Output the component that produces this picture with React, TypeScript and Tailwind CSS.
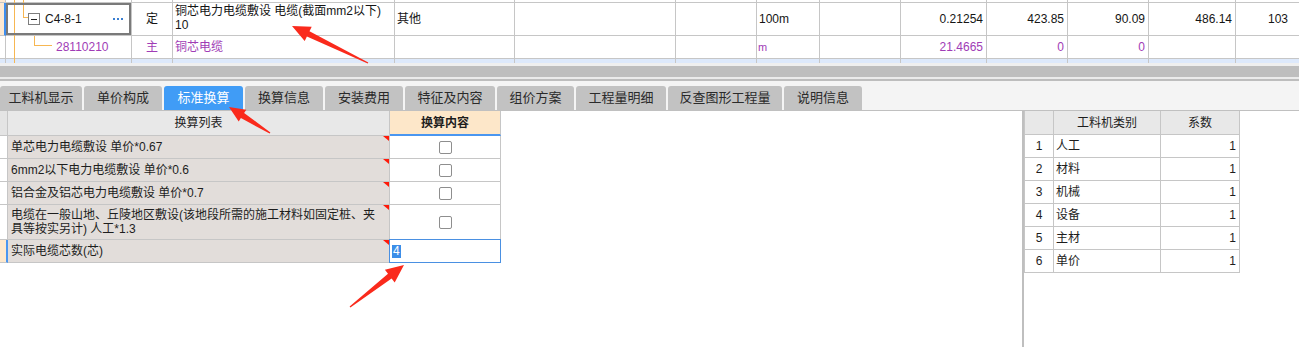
import React from "react";

const topW = [
  "w-[6px]",
  "w-[126px]",
  "w-[41px]",
  "w-[222px]",
  "w-[120px]",
  "w-[161px]",
  "w-[81px]",
  "w-[63px]",
  "w-[81px]",
  "w-[86px]",
  "w-[81px]",
  "w-[81px]",
  "w-[87px]",
  "w-[120px]",
];

type CellDef = { c?: React.ReactNode; cls?: string };

function TopRow({ h, bg = "", cells }: { h: string; bg?: string; cells: Record<number, CellDef> }) {
  return (
    <div className={`flex ${h} ${bg}`}>
      {topW.map((w, i) => {
        const d = cells[i] || {};
        return (
          <div key={i} className={`${w} shrink-0 relative border-r border-b border-[#c6c6c6] ${d.cls ?? ""}`}>
            {d.c}
          </div>
        );
      })}
    </div>
  );
}

const TreeMain = () => <div className="absolute left-[8px] top-0 -bottom-px w-px bg-[#f7b752]" />;

function TopGrid() {
  const purple = "text-[#a03cb6]";
  return (
    <div className="h-[63px] overflow-hidden text-[12px] text-[#151515]">
      <TopRow
        h="h-[3px]"
        cells={{
          0: { cls: "bg-[#fde9d2]" },
          1: {
            c: (
              <>
                <TreeMain />
                <div className="absolute left-[17px] top-0 -bottom-px w-px bg-[#f7b752]" />
              </>
            ),
          },
        }}
      />
      <TopRow
        h="h-[33px]"
        cells={{
          0: { cls: "bg-[#fde9d2] border-r-2 border-r-[#3d8ef0]" },
          1: {
            cls: "flex items-center",
            c: (
              <>
                <TreeMain />
                <div className="absolute left-[17px] top-0 h-[14px] w-px bg-[#f7b752]" />
                <div className="absolute left-[17px] top-[14px] h-px w-[5px] bg-[#f7b752]" />
                <div className="ml-[22px] w-[12px] h-[12px] border border-[#7d7d7d] bg-white flex items-center justify-center shrink-0">
                  <div className="w-[6px] h-px bg-[#222]" />
                </div>
                <span className="ml-[5px] leading-[14px]">C4-8-1</span>
                <div className="ml-auto mr-[8px] flex gap-[2px]">
                  <div className="w-[2px] h-[2px] bg-[#3a7fd2]" />
                  <div className="w-[2px] h-[2px] bg-[#3a7fd2]" />
                  <div className="w-[2px] h-[2px] bg-[#3a7fd2]" />
                </div>
                <div className="absolute inset-0 border-2 border-[#7a7a7a] pointer-events-none" />
              </>
            ),
          },
          2: { cls: "flex items-center justify-center", c: <span>定</span> },
          3: {
            cls: "pl-[2px] pt-[1px] leading-[14px] whitespace-nowrap",
            c: (
              <>
                <div>铜芯电力电缆敷设 电缆(截面mm2以下)</div>
                <div>10</div>
              </>
            ),
          },
          4: { cls: "flex items-center pl-[2px]", c: <span>其他</span> },
          7: { cls: "flex items-center pl-[2px]", c: <span>100m</span> },
          9: { cls: "flex items-center justify-end pr-[3px]", c: <span>0.21254</span> },
          10: { cls: "flex items-center justify-end pr-[3px]", c: <span>423.85</span> },
          11: { cls: "flex items-center justify-end pr-[3px]", c: <span>90.09</span> },
          12: { cls: "flex items-center justify-end pr-[3px]", c: <span>486.14</span> },
          13: { cls: "flex items-center pl-[32px]", c: <span>103</span> },
        }}
      />
      <TopRow
        h="h-[23px]"
        cells={{
          1: {
            cls: `flex items-center ${purple}`,
            c: (
              <>
                <TreeMain />
                <div className="absolute left-[28px] top-0 h-[9px] w-px bg-[#f7b752]" />
                <div className="absolute left-[28px] top-[9px] h-px w-[18px] bg-[#f7b752]" />
                <span className="ml-[50px]">28110210</span>
              </>
            ),
          },
          2: { cls: `flex items-center justify-center ${purple}`, c: <span>主</span> },
          3: { cls: `flex items-center pl-[2px] ${purple}`, c: <span>铜芯电缆</span> },
          7: { cls: `flex items-center pl-[1px] text-[11px] ${purple}`, c: <span>m</span> },
          9: { cls: `flex items-center justify-end pr-[3px] ${purple}`, c: <span>21.4665</span> },
          10: { cls: `flex items-center justify-end pr-[3px] ${purple}`, c: <span>0</span> },
          11: { cls: `flex items-center justify-end pr-[3px] ${purple}`, c: <span>0</span> },
        }}
      />
      <TopRow h="h-[6px]" bg="bg-[#dde9fb]" cells={{ 1: { c: <TreeMain /> } }} />
    </div>
  );
}

const tabs: { label: string; w: string; active?: boolean }[] = [
  { label: "工料机显示", w: "w-[82px]" },
  { label: "单价构成", w: "w-[78px]" },
  { label: "标准换算", w: "w-[79px]", active: true },
  { label: "换算信息", w: "w-[78px]" },
  { label: "安装费用", w: "w-[78px]" },
  { label: "特征及内容", w: "w-[90px]" },
  { label: "组价方案", w: "w-[77px]" },
  { label: "工程量明细", w: "w-[90px]" },
  { label: "反查图形工程量", w: "w-[114px]" },
  { label: "说明信息", w: "w-[78px]" },
];

function TabBar() {
  return (
    <div className="h-[30px] bg-[#f4f4f4] border-b border-[#c0c0c0] flex items-end gap-[2px]">
      {tabs.map((t) => (
        <div
          key={t.label}
          className={`${t.w} h-[24px] shrink-0 rounded-t-[3px] flex items-center justify-center text-[13px] ${
            t.active ? "bg-[#409cf6] text-white" : "bg-[#c2c2c2] text-[#2a2a2a]"
          }`}
        >
          {t.label}
        </div>
      ))}
    </div>
  );
}

const RedCorner = () => (
  <svg className="absolute top-0 right-0" width="6" height="5" viewBox="0 0 6 5">
    <polygon points="0,0 6,0 6,5" fill="#ff1a0a" />
  </svg>
);

const Checkbox = () => <div className="w-[13px] h-[13px] border border-[#8e8e8e] rounded-[2px] bg-white" />;

const leftRows: { h: string; text: React.ReactNode; kind: "cb" | "input" }[] = [
  { h: "h-[23px]", text: "单芯电力电缆敷设 单价*0.67", kind: "cb" },
  { h: "h-[23px]", text: "6mm2以下电力电缆敷设 单价*0.6", kind: "cb" },
  { h: "h-[23px]", text: "铝合金及铝芯电力电缆敷设 单价*0.7", kind: "cb" },
  {
    h: "h-[35px]",
    text: (
      <div className="leading-[14px]">
        <div>电缆在一般山地、丘陵地区敷设(该地段所需的施工材料如固定桩、夹</div>
        <div>具等按实另计) 人工*1.3</div>
      </div>
    ),
    kind: "cb",
  },
  { h: "h-[23px]", text: "实际电缆芯数(芯)", kind: "input" },
];

function LeftTable() {
  const b = "border-r border-b border-[#c6c6c6]";
  return (
    <div className="w-[501px] text-[12px] text-[#1d1d1d]">
      <div className="flex h-[25px]">
        <div className={`w-[8px] shrink-0 bg-[#e4e4e4] ${b}`} />
        <div className={`w-[382px] shrink-0 bg-[#e8e8e8] flex items-center justify-center ${b}`}>换算列表</div>
        <div className="w-[111px] shrink-0 bg-[#fde7c9] border-r border-[#c6c6c6] border-b-2 border-b-[#4a96f0] flex items-center justify-center font-bold">
          换算内容
        </div>
      </div>
      {leftRows.map((r, i) => (
        <div key={i} className={`flex ${r.h}`}>
          <div
            className={`w-[8px] shrink-0 ${b} ${
              r.kind === "input" ? "bg-[#fde8cd] border-r-2 border-r-[#4a96f0]" : "bg-white"
            }`}
          />
          <div className={`w-[382px] shrink-0 bg-[#e2ddda] relative flex items-center pl-[3px] whitespace-nowrap ${b}`}>
            {r.text}
            <RedCorner />
          </div>
          <div className={`w-[111px] shrink-0 bg-white relative flex items-center ${r.kind === "cb" ? "justify-center" : ""} ${b}`}>
            {r.kind === "cb" ? (
              <Checkbox />
            ) : (
              <>
                <span className="ml-[2px] bg-[#3c8ee8] text-white leading-[13px] px-px">4</span>
                <div className="absolute -left-px -top-px -right-px -bottom-px border border-[#4a90e2]" />
              </>
            )}
          </div>
        </div>
      ))}
    </div>
  );
}

const rightRows = ["人工", "材料", "机械", "设备", "主材", "单价"];

function RightTable() {
  const b = "border-r border-b border-[#c6c6c6]";
  return (
    <div className="w-[216px] border-l border-[#c6c6c6] text-[12px] text-[#1d1d1d]">
      <div className="flex h-[24px] bg-[#e8e8e8]">
        <div className={`w-[29px] shrink-0 ${b}`} />
        <div className={`w-[107px] shrink-0 flex items-center justify-center ${b}`}>工料机类别</div>
        <div className={`w-[79px] shrink-0 flex items-center justify-center ${b}`}>系数</div>
      </div>
      {rightRows.map((r, i) => (
        <div key={r} className="flex h-[23px] bg-white">
          <div className={`w-[29px] shrink-0 flex items-center justify-center ${b}`}>{i + 1}</div>
          <div className={`w-[107px] shrink-0 flex items-center pl-[2px] ${b}`}>{r}</div>
          <div className={`w-[79px] shrink-0 flex items-center justify-end pr-[3px] ${b}`}>1</div>
        </div>
      ))}
    </div>
  );
}

function Arrows() {
  return (
    <svg className="absolute left-0 top-0 pointer-events-none" width="1299" height="347" viewBox="0 0 1299 347">
      <polygon
        points="368.3,62.4 309.5,31.2 311.7,26.7 292,26 304.7,41.1 306.9,36.6 367.7,63.6"
        fill="#fa2a1c"
      />
      <polygon
        points="270.4,132.4 244.1,113.1 246.3,109.7 229,107 238.7,121.5 240.9,118.1 269.6,133.6"
        fill="#fa2a1c"
      />
      <polygon
        points="350.4,307.6 391.6,278.4 394.7,282.4 404,265 384.9,269.7 388,273.7 349.6,306.4"
        fill="#fa2a1c"
      />
    </svg>
  );
}

export default function App() {
  return (
    <div className="relative w-[1299px] h-[347px] overflow-hidden bg-white font-['Liberation_Sans','Noto_Sans_CJK_SC',sans-serif]">
      <TopGrid />
      <div className="h-[3px] bg-[#efefef]" />
      <div className="h-[11px] bg-[#bebebe]" />
      <div className="h-[2px] bg-[#ebebeb]" />
      <div className="h-[2px] bg-[#bdbdbd]" />
      <TabBar />
      <div className="flex h-[236px]">
        <div className="w-[1022px] shrink-0">
          <LeftTable />
        </div>
        <div className="w-[2px] shrink-0 bg-[#bfbfbf]" />
        <div className="flex-1">
          <RightTable />
        </div>
      </div>
      <Arrows />
    </div>
  );
}
